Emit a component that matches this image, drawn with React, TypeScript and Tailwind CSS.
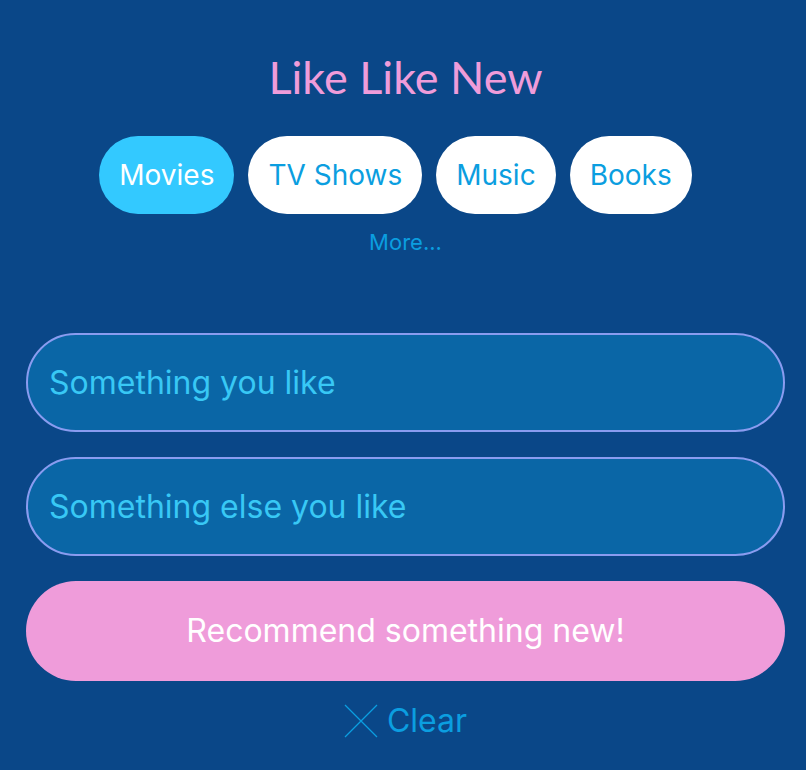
import { useState } from "react";

const categories = ["Movies", "TV Shows", "Music", "Books"];

export default function App() {
  const [active, setActive] = useState<string>("Movies");
  const [first, setFirst] = useState<string>("");
  const [second, setSecond] = useState<string>("");

  return (
    <div className="min-h-[770px] w-full bg-[#0a4788] pl-[26px] pr-[21px] pt-[50px] font-['Inter',sans-serif]">
      <h1 className="text-center font-['Lato',sans-serif] text-[45px] leading-[54px] text-[#ef9cda]">
        Like Like New
      </h1>

      <div className="mt-[32px] flex justify-center gap-[14px] pr-[20px]">
        {categories.map((c) => (
          <button
            key={c}
            onClick={() => setActive(c)}
            className={`h-[78px] rounded-full px-[20px] text-[28px] ${
              active === c ? "bg-[#33c9ff] text-white" : "bg-white text-[#0b9ee0]"
            }`}
          >
            {c}
          </button>
        ))}
      </div>
      <div className="mt-[12px] text-center text-[22px] text-[#0b9ee0]">More...</div>

      <div className="mt-[74px] flex flex-col gap-[25px]">
        <input
          value={first}
          onChange={(e) => setFirst(e.target.value)}
          placeholder="Something you like"
          className="h-[99px] w-full rounded-full border-2 border-[#8a9cf0] bg-[#0a66a6] px-[21px] text-[32px] text-[#38c8f5] outline-none placeholder:text-[#38c8f5]"
        />
        <input
          value={second}
          onChange={(e) => setSecond(e.target.value)}
          placeholder="Something else you like"
          className="h-[99px] w-full rounded-full border-2 border-[#8a9cf0] bg-[#0a66a6] px-[21px] text-[32px] text-[#38c8f5] outline-none placeholder:text-[#38c8f5]"
        />
        <button className="h-[100px] w-full rounded-full bg-[#ef9cda] text-[32px] text-white">
          Recommend something new!
        </button>
      </div>

      <button
        onClick={() => {
          setFirst("");
          setSecond("");
        }}
        className="mx-auto mt-[16px] flex items-center gap-[9px] text-[32px] text-[#0b9ee0]"
      >
        <svg width="34" height="34" viewBox="0 0 34 34" fill="none" stroke="currentColor" strokeWidth="1.3">
          <path d="M1 1L33 33M33 1L1 33" />
        </svg>
        Clear
      </button>
    </div>
  );
}
